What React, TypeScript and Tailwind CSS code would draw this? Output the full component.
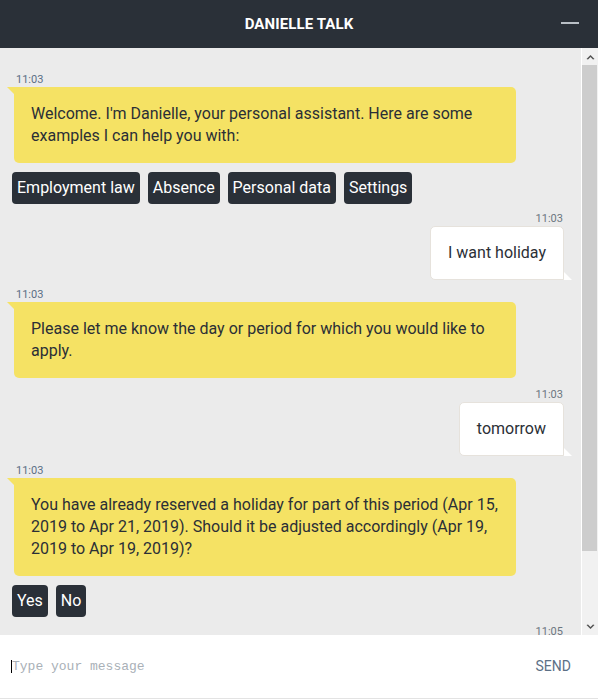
const font = { fontFamily: "Roboto, 'Liberation Sans', sans-serif" }

type Msg =
  | { from: "bot"; time: string; text: string; options?: string[] }
  | { from: "user"; time: string; text: string }

const messages: Msg[] = [
  {
    from: "bot",
    time: "11:03",
    text: "Welcome. I'm Danielle, your personal assistant. Here are some examples I can help you with:",
    options: ["Employment law", "Absence", "Personal data", "Settings"],
  },
  { from: "user", time: "11:03", text: "I want holiday" },
  {
    from: "bot",
    time: "11:03",
    text: "Please let me know the day or period for which you would like to apply.",
  },
  { from: "user", time: "11:03", text: "tomorrow" },
  {
    from: "bot",
    time: "11:03",
    text: "You have already reserved a holiday for part of this period (Apr 15, 2019 to Apr 21, 2019). Should it be adjusted accordingly (Apr 19, 2019 to Apr 19, 2019)?",
    options: ["Yes", "No"],
  },
  { from: "user", time: "11:05", text: "" },
]

const BotMessage = ({ time, text, options }: { time: string; text: string; options?: string[] }) => {
  return (
    <div className={options ? "mb-2" : "mb-[10px]"}>
      <div className="pl-[16px] text-[11px] leading-[14px] text-[#5b6f86]">{time}</div>
      <div className="relative ml-[14px] max-w-[502px] rounded-[5px] rounded-tl-none bg-[#f5e264] px-[17px] py-4 text-[16px] leading-[22px] text-[#2b2f36]">
        <span className="absolute left-[-7px] top-0 h-0 w-0 border-l-[7px] border-t-[7px] border-l-transparent border-t-[#f5e264]" />
        {text}
      </div>
      {options && (
        <div className="mt-[9px] flex gap-2 pl-3">
          {options.map((o) => (
            <button
              key={o}
              className="rounded-[4px] bg-[#2a3038] px-[5px] py-[5px] text-[16px] leading-[22px] text-white"
            >
              {o}
            </button>
          ))}
        </div>
      )}
    </div>
  )
}

const UserMessage = ({ time, text }: { time: string; text: string }) => {
  return (
    <div className="mb-2 flex flex-col items-end pr-[17px]">
      <div className="pr-[1px] text-[11px] leading-[14px] text-[#6b7680]">{time}</div>
      {text && (
        <div className="relative rounded-[5px] rounded-br-none border border-[#e6e2dc] bg-white px-[17px] py-[15px] text-[16px] leading-[22px] text-[#2b2f36]">
          <span className="absolute bottom-[-1px] right-[-9px] h-0 w-0 border-b-[8px] border-r-[8px] border-b-white border-r-transparent" />
          {text}
        </div>
      )}
    </div>
  )
}

const ScrollBar = () => {
  return (
    <div className="flex w-[17px] flex-col border-l border-white bg-[#f1f1f1]">
      <div className="flex h-[17px] items-center justify-center">
        <svg width="9" height="6" viewBox="0 0 9 6">
          <path d="M0.5 5 L4.5 1 L8.5 5 L7 5.5 L4.5 3 L2 5.5 Z" fill="#505050" />
        </svg>
      </div>
      <div className="mr-[1px] h-[486px] bg-[#cdcdcd]" />
      <div className="flex-1" />
      <div className="flex h-[17px] items-center justify-center">
        <svg width="9" height="6" viewBox="0 0 9 6">
          <path d="M0.5 1 L4.5 5 L8.5 1 L7 0.5 L4.5 3 L2 0.5 Z" fill="#505050" />
        </svg>
      </div>
    </div>
  )
}

export default function App() {
  return (
    <div className="flex h-[700px] w-[598px] flex-col bg-white" style={font}>
      <div className="relative flex h-12 shrink-0 items-center justify-center bg-[#2a3038]">
        <span className="text-[15px] font-bold tracking-[0.1px] text-white">DANIELLE TALK</span>
        <span className="absolute right-[19px] top-[22px] h-[2px] w-[18px] bg-[#b9bfc6]" />
      </div>

      <div className="flex h-[587px] shrink-0 bg-[#ebebeb]">
        <div className="flex-1 overflow-hidden pt-[25px]">
          {messages.map((m, i) =>
            m.from === "bot" ? (
              <BotMessage key={i} time={m.time} text={m.text} options={m.options} />
            ) : (
              <UserMessage key={i} time={m.time} text={m.text} />
            )
          )}
        </div>
        <ScrollBar />
      </div>

      <div className="flex h-[64px] shrink-0 items-center justify-between border-b border-[#e3e3e3] pl-[11px] pr-[27px]">
        <div className="flex items-center">
          <span className="h-[13px] w-[1px] bg-black" />
          <span className="text-[13px] text-[#a9b0b7]" style={{ fontFamily: "'Liberation Mono', monospace" }}>
            Type your message
          </span>
        </div>
        <span className="text-[14px] text-[#5c7086]">SEND</span>
      </div>
    </div>
  )
}
